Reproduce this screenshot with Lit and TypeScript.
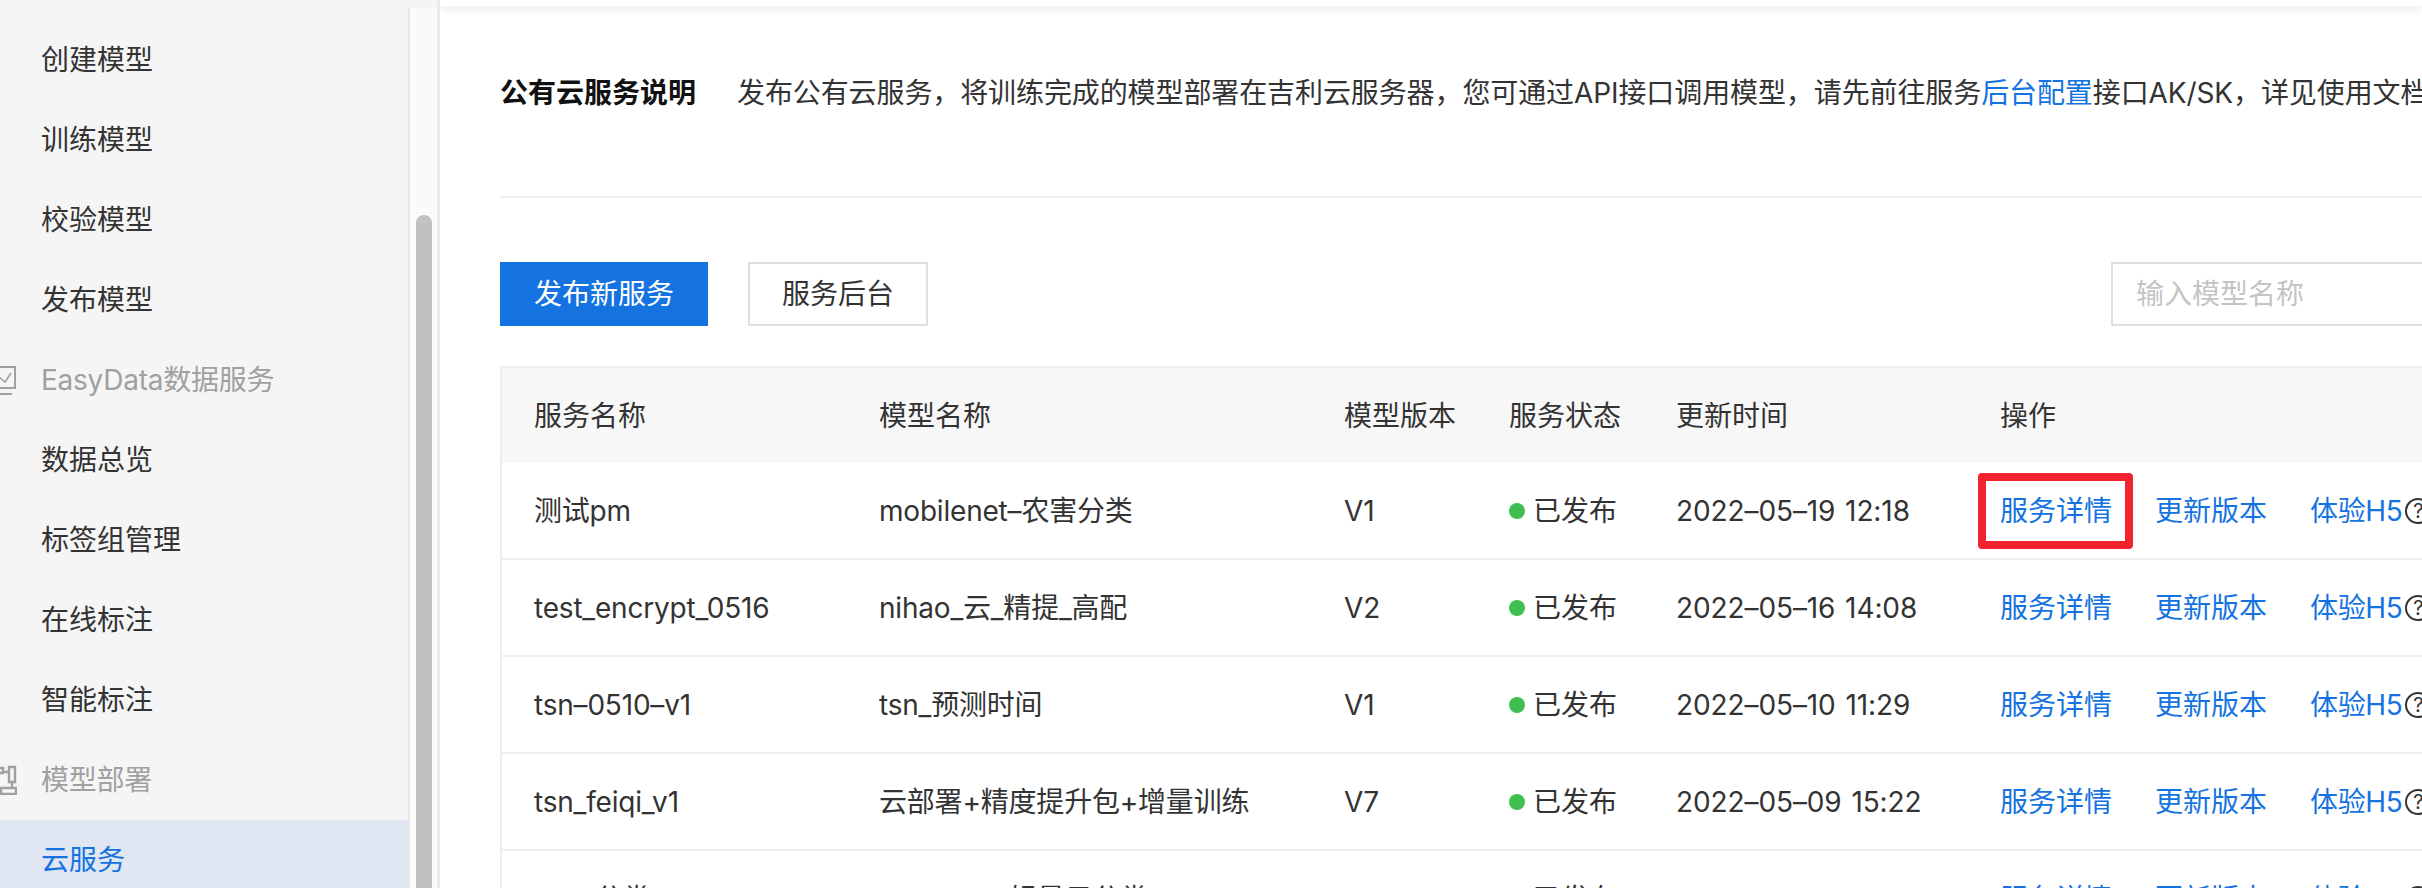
import { LitElement, html, css } from "lit";
import { customElement } from "lit/decorators.js";

type Row = { name: string; model: string; ver: string; time: string };
const rows: Row[] = [
  { name: "测试pm", model: "mobilenet–农害分类", ver: "V1", time: "2022–05–19 12:18" },
  { name: "test_encrypt_0516", model: "nihao_云_精提_高配", ver: "V2", time: "2022–05–16 14:08" },
  { name: "tsn–0510–v1", model: "tsn_预测时间", ver: "V1", time: "2022–05–10 11:29" },
  { name: "tsn_feiqi_v1", model: "云部署+精度提升包+增量训练", ver: "V7", time: "2022–05–09 15:22" },
  { name: "test_分类", model: "resnet50–轻量云分类", ver: "V1", time: "2022–05–06 10:12" },
];
const group1 = ["创建模型", "训练模型", "校验模型", "发布模型"];
const group2 = ["数据总览", "标签组管理", "在线标注", "智能标注"];

@customElement("app-root")
export class AppRoot extends LitElement {
  static styles = css`
    :host {
      display: block;
      width: 2422px;
      height: 888px;
      overflow: hidden;
      background: #fff;
      color: #333;
      font-family: "Inter", "Noto Sans CJK SC", sans-serif;
      font-size: 28px;
      line-height: 40px;
    }
    * { box-sizing: border-box; }
    .page { display: flex; height: 888px; }
    .aside { flex: none; width: 440px; display: flex; background: #f5f5f5; border-right: 3px solid #ebebeb; }
    .nav { flex: none; width: 408px; padding-top: 20px; }
    .item { height: 80px; display: flex; align-items: center; padding-left: 41px; position: relative; }
    .group { color: #a0a0a0; letter-spacing: -0.25px; }
    .group svg { position: absolute; left: 0; width: 17px; height: 30px; }
    .active { background: #e0e7f2; color: #1473e0; }
    .track { flex: 1; margin-top: 8px; background: #fafafa; border-left: 2px solid #e8e8e8; padding: 207px 5px 0 6px; }
    .thumb { height: 800px; background: #c1c1c1; border-radius: 8px 8px 0 0; }
    .main { flex: 1; min-width: 0; overflow: hidden; }
    .shade { height: 6px; background: #fff; box-shadow: 0 3px 8px rgba(0, 0, 0, 0.1); position: relative; }
    .content { width: 2000px; margin-left: 60px; }
    .notice { white-space: nowrap; padding: 67px 0 83px; border-bottom: 2px solid #eee; height: 192px; letter-spacing: -0.1px; }
    .notice b { font-weight: 700; color: #111; margin-right: 41px; letter-spacing: 0; }
    .notice a, .link { color: #1473e0; text-decoration: none; }
    .toolbar { display: flex; gap: 40px; margin-top: 64px; height: 64px; }
    .btn { display: flex; align-items: center; justify-content: center; }
    .primary { width: 208px; background: #1473e0; color: #fff; }
    .ghost { width: 180px; border: 2px solid #e0e0e0; }
    .search { width: 389px; margin-left: auto; border: 2px solid #e0e0e0; padding-left: 23px; display: flex; align-items: center; color: #c4c4c4; }
    table { margin-top: 40px; width: 2000px; table-layout: fixed; border-collapse: separate; border-spacing: 0; border-top: 2px solid #eee; border-left: 2px solid #eee; }
    th, td { padding: 0 0 0 32px; text-align: left; font-weight: 400; white-space: nowrap; }
    th { height: 95px; background: #f7f7f7; }
    td { height: 97px; border-bottom: 2px solid #eee; }
    .c1 { width: 345px; }
    .c2 { width: 465px; }
    .c3 { width: 165px; }
    .c4 { width: 167px; }
    .c5 { width: 324px; }
    .latin { letter-spacing: -0.2px; }
    .time { word-spacing: 2px; letter-spacing: -0.1px; }
    .status { display: flex; align-items: center; gap: 8px; }
    .dot { width: 16px; height: 16px; border-radius: 50%; background: #3fbf4f; }
    .ops { display: flex; align-items: center; gap: 43px; }
    .marked { position: relative; }
    .marked::after {
      content: "";
      position: absolute;
      inset: -18px -21px -18px -22px;
      border: 8px solid #f3222f;
      border-radius: 4px;
    }
    .h5 { display: flex; align-items: center; gap: 3px; letter-spacing: -0.4px; }
    .help {
      flex: none;
      width: 26px;
      height: 26px;
      border: 2px solid #333;
      border-radius: 50%;
      display: flex;
      align-items: center;
      justify-content: center;
      font-size: 20px;
      color: #333;
    }
  `;

  render() {
    return html`
      <div class="page">
        <aside class="aside">
          <nav class="nav">
            ${group1.map((t) => html`<div class="item">${t}</div>`)}
            <div class="item group">
              <svg viewBox="0 0 17 30" fill="none" stroke="#a0a0a0" stroke-width="2">
                <path d="M-4 2H15V23H-4M-2 29H12" />
                <path d="M-1 12L5 17L11 8" stroke-width="1.6" />
              </svg>
              EasyData数据服务
            </div>
            ${group2.map((t) => html`<div class="item">${t}</div>`)}
            <div class="item group">
              <svg viewBox="0 0 17 30" fill="none" stroke="#a0a0a0" stroke-width="2.4">
                <path d="M9 2H15V17H9ZM-2 3H3V8H-2M3 7H9M12 17V23M1 23H16V29H1Z" />
              </svg>
              模型部署
            </div>
            <div class="item active">云服务</div>
          </nav>
          <div class="track"><div class="thumb"></div></div>
        </aside>
        <main class="main">
          <div class="shade"></div>
          <div class="content">
            <div class="notice">
              <b>公有云服务说明</b>发布公有云服务，将训练完成的模型部署在吉利云服务器，您可通过API接口调用模型，请先前往服务<a href="#">后台配置</a>接口AK/SK，详见使用文档。
            </div>
            <div class="toolbar">
              <div class="btn primary">发布新服务</div>
              <div class="btn ghost">服务后台</div>
              <div class="search">输入模型名称</div>
            </div>
            <table>
              <colgroup>
                <col class="c1" /><col class="c2" /><col class="c3" /><col class="c4" /><col class="c5" /><col />
              </colgroup>
              <thead>
                <tr>
                  <th>服务名称</th><th>模型名称</th><th>模型版本</th><th>服务状态</th><th>更新时间</th><th>操作</th>
                </tr>
              </thead>
              <tbody>
                ${rows.map(
                  (r, i) => html`
                    <tr>
                      <td class="latin">${r.name}</td>
                      <td class="latin">${r.model}</td>
                      <td>${r.ver}</td>
                      <td><div class="status"><span class="dot"></span>已发布</div></td>
                      <td class="time">${r.time}</td>
                      <td>
                        <div class="ops">
                          <a class="link ${i === 0 ? "marked" : ""}">服务详情</a>
                          <a class="link">更新版本</a>
                          <span class="h5"><a class="link">体验H5</a><span class="help">?</span></span>
                        </div>
                      </td>
                    </tr>
                  `
                )}
              </tbody>
            </table>
          </div>
        </main>
      </div>
    `;
  }
}
